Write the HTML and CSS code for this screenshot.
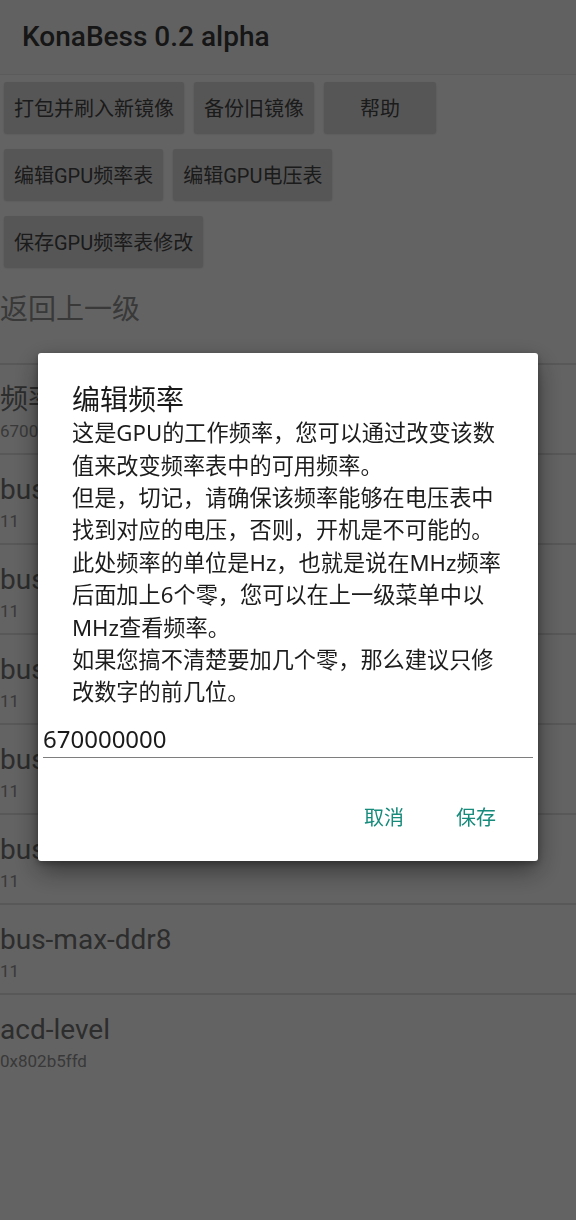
FILE: index.html
```html
<!DOCTYPE html>
<html lang="zh-CN">
<head>
<meta charset="utf-8">
<title>KonaBess 0.2 alpha</title>
<link rel="stylesheet" href="styles.css">
</head>
<body>
<div class="app">
  <header class="toolbar">
    <h1 class="toolbar-title">KonaBess 0.2 alpha</h1>
  </header>
  <section class="actions">
    <div class="action-row">
      <button class="btn">打包并刷入新镜像</button>
      <button class="btn">备份旧镜像</button>
      <button class="btn">帮助</button>
    </div>
    <div class="action-row">
      <button class="btn">编辑GPU频率表</button>
      <button class="btn">编辑GPU电压表</button>
    </div>
    <div class="action-row">
      <button class="btn">保存GPU频率表修改</button>
    </div>
  </section>
  <ul class="list">
    <li class="item item-back"><div class="item-title">返回上一级</div></li>
    <li class="item"><div class="item-title">频率</div><div class="item-sub">670000000</div></li>
    <li class="item"><div class="item-title">bus-freq-ddr7</div><div class="item-sub">11</div></li>
    <li class="item"><div class="item-title">bus-min-ddr7</div><div class="item-sub">11</div></li>
    <li class="item"><div class="item-title">bus-max-ddr7</div><div class="item-sub">11</div></li>
    <li class="item"><div class="item-title">bus-freq-ddr8</div><div class="item-sub">11</div></li>
    <li class="item"><div class="item-title">bus-min-ddr8</div><div class="item-sub">11</div></li>
    <li class="item"><div class="item-title">bus-max-ddr8</div><div class="item-sub">11</div></li>
    <li class="item"><div class="item-title">acd-level</div><div class="item-sub">0x802b5ffd</div></li>
  </ul>
</div>

<div class="scrim">
  <div class="dialog">
    <h2 class="dialog-title">编辑频率</h2>
    <div class="dialog-body">
      <span class="line">这是GPU的工作频率，您可以通过改变该数</span>
      <span class="line">值来改变频率表中的可用频率。</span>
      <span class="line">但是，切记，请确保该频率能够在电压表中</span>
      <span class="line">找到对应的电压，否则，开机是不可能的。</span>
      <span class="line">此处频率的单位是Hz，也就是说在MHz频率</span>
      <span class="line">后面加上6个零，您可以在上一级菜单中以</span>
      <span class="line">MHz查看频率。</span>
      <span class="line">如果您搞不清楚要加几个零，那么建议只修</span>
      <span class="line">改数字的前几位。</span>
    </div>
    <div class="field">670000000</div>
    <div class="dialog-actions">
      <button class="text-btn">取消</button>
      <button class="text-btn">保存</button>
    </div>
  </div>
</div>
</body>
</html>
```

FILE: styles.css
```css
html, body {
  margin: 0;
  padding: 0;
  background: #f8f8f8;
}
body {
  width: 576px;
  min-height: 1220px;
  font-family: Roboto, "Noto Sans CJK SC", sans-serif;
}
.app {
  display: flex;
  flex-direction: column;
}
.toolbar {
  height: 75px;
  box-sizing: border-box;
  padding-left: 22px;
  display: flex;
  align-items: center;
  background: #f3f3f3;
  border-bottom: 1px solid #e4e4e4;
}
.toolbar-title {
  margin: 0;
  font-size: 28px;
  line-height: 34px;
  font-weight: 500;
  color: #373737;
}
.actions {
  display: flex;
  flex-direction: column;
  gap: 16px;
  padding: 7px 0 8px 4px;
}
.action-row {
  display: flex;
  gap: 10px;
}
.btn {
  height: 51px;
  min-width: 112px;
  padding: 0 10px;
  border: none;
  border-radius: 2px;
  background: #d8d8d8;
  box-shadow: 0 1px 2px rgba(0,0,0,0.18);
  font-family: Roboto, "Noto Sans CJK SC", sans-serif;
  font-size: 20px;
  font-weight: 400;
  color: #444444;
  white-space: nowrap;
}
.list {
  list-style: none;
  margin: 0;
  padding: 0;
}
.item {
  height: 90px;
  box-sizing: border-box;
  padding-top: 18px;
  border-bottom: 2px solid #dcdcdc;
}
.item:last-child {
  border-bottom: none;
}
.item-title {
  font-size: 28px;
  line-height: 34px;
  color: #707070;
  white-space: nowrap;
}
.item-back .item-title {
  color: #8e8e8e;
}
.item-sub {
  margin-top: 4px;
  font-size: 17px;
  line-height: 20px;
  color: #8f8f8f;
}
.scrim {
  position: fixed;
  inset: 0;
  background: rgba(0,0,0,0.6);
  display: flex;
  align-items: center;
  justify-content: center;
  padding-bottom: 6px;
}
.dialog {
  width: 500px;
  box-sizing: border-box;
  background: #ffffff;
  border-radius: 3px;
  box-shadow: 0 10px 26px rgba(0,0,0,0.45), 0 2px 6px rgba(0,0,0,0.3);
  padding: 29px 0 20px;
  font-family: "Noto Sans", "Noto Sans CJK SC", sans-serif;
  color: #1c1c1c;
}
.dialog-title {
  margin: 0;
  padding-left: 34px;
  font-family: "Noto Sans CJK SC", sans-serif;
  font-size: 28px;
  line-height: 32px;
  font-weight: 400;
  color: #1a1a1a;
}
.dialog-body {
  margin-top: 3px;
  padding-left: 34px;
  font-size: 22.2px;
  line-height: 32.4px;
}
.line {
  display: block;
  white-space: nowrap;
}
.field {
  margin: 15.6px 5px 0;
  padding-bottom: 3px;
  border-bottom: 1.5px solid #7e7e7e;
  font-size: 24px;
  line-height: 30px;
  color: #1a1a1a;
}
.dialog-actions {
  margin-top: 34.5px;
  height: 48px;
  display: flex;
  justify-content: flex-end;
  align-items: center;
  gap: 28px;
  padding-right: 30px;
}
.text-btn {
  height: 48px;
  padding: 0 12px;
  border: none;
  background: transparent;
  font-family: "Noto Sans CJK SC", sans-serif;
  font-size: 20px;
  color: #168a7b;
}
```
